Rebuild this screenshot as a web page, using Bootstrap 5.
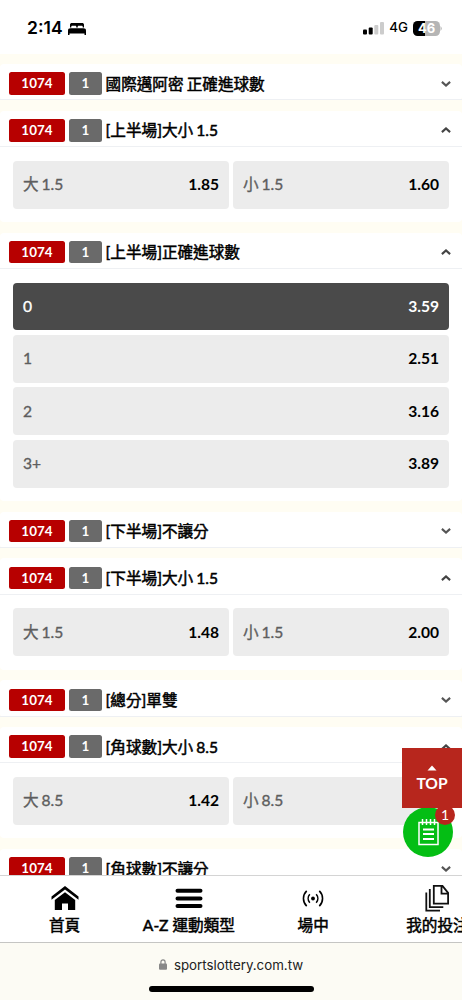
<!DOCTYPE html>
<html lang="zh-Hant">
<head>
<meta charset="utf-8">
<meta name="viewport" content="width=device-width, initial-scale=1">
<title>sportslottery.com.tw</title>
<link href="https://cdn.jsdelivr.net/npm/bootstrap@5.3.0/dist/css/bootstrap.min.css" rel="stylesheet">
<style>
  body { font-family: Lato, "Noto Sans CJK TC", sans-serif; background: #fffdf3; color: #000; height: 1000px; }
  svg { display: block; flex: none; }
  .status { height: 53.5px; background: #fff; font-family: Inter, sans-serif; padding: 3px 20px 0 27px; flex: none; }
  .clock { font-size: 17.5px; font-weight: 600; letter-spacing: 0; }
  .net { font-size: 13.3px; font-weight: 500; }
  .battery { width: 27px; height: 15px; border-radius: 4.5px; background: linear-gradient(90deg, #000 46%, #b5b5b5 46%); color: #fff; font-size: 13px; font-weight: 700; line-height: 15px; }
  .markets { flex: 1 1 0; min-height: 0; gap: 10.4px; padding-top: 10.4px; }
  .market { background: #fff; border-radius: 4px; flex: none; }
  .market-head { height: 36.4px; border-bottom: 1px solid #eef0f3; padding: 4px 9px 0; gap: 4.4px; }
  .tag { height: 22.4px; border-radius: 2.5px; color: #fff; font-size: 13.4px; font-weight: 700; line-height: 23px; text-align: center; flex: none; }
  .tag-id { width: 55.8px; background: #b70000; }
  .tag-no { width: 32.6px; background: #6a6a6a; }
  .market-name { font-size: 15.6px; font-weight: 400; -webkit-text-stroke: .5px #000; line-height: 22px; white-space: nowrap; margin-left: -.6px; word-spacing: -.8px; }
  .market-body { padding: 13.6px 13.3px; display: grid; gap: 4.5px; }
  .two { grid-template-columns: 1fr 1fr; }
  .odd { height: 47.9px; border-radius: 4px; background: #ececec; padding: 0 9.7px; font-size: 15.6px; }
  .odd span { color: #5e5e5e; font-weight: 400; -webkit-text-stroke: .35px currentColor; word-spacing: -1px; }
  .odd b { font-weight: 700; }
  .odd.chosen, .odd.chosen span { background: #4a4a4a; color: #fff; }
  .tabs { height: 67px; background: #fff; border-top: 1px solid #d4d4d4; padding-left: 2.4px; flex: none; }
  .tab { width: 124.3px; flex: none; font-size: 15.6px; font-weight: 400; -webkit-text-stroke: .5px #000; line-height: 22px; color: #000; padding-top: 9px; white-space: nowrap; }
  .tab svg { height: 29px; }
  .address { height: 58px; background: #fcfbf4; border-top: 1px solid #c5c5c3; font: 13.3px/18px Inter, sans-serif; color: #222; padding-top: 12.500px; gap: 12px; flex: none; }
  .homebar { width: 165px; height: 6px; border-radius: 3px; background: #000; }
  .to-top { position: absolute; right: 0; top: 748px; width: 60px; height: 60px; background: #b7261d; color: #fff; font-size: 15.6px; font-weight: 700; line-height: 20px; z-index: 3; padding-top: 17px; }
  .slip { position: absolute; left: 403px; top: 807px; width: 50px; height: 50px; border-radius: 50%; background: #04be14; z-index: 2; }
  .slip-count { position: absolute; left: 32px; top: -2px; width: 20px; height: 20px; border-radius: 50%; background: #b7261d; color: #fff; font-size: 14px; line-height: 20px; text-align: center; }
</style>
</head>
<body class="d-flex flex-column overflow-hidden position-relative">
<svg width="0" height="0" class="position-absolute">
  <symbol id="down" viewBox="0 0 10 6"><path d="M.9.9 5 4.6 9.1.9" fill="none" stroke="#555" stroke-width="2.1"/></symbol>
  <symbol id="up" viewBox="0 0 10 6"><path d="M.9 5.1 5 1.4 9.1 5.1" fill="none" stroke="#444" stroke-width="2.1"/></symbol>
</svg>

<header class="status d-flex align-items-center">
  <span class="clock">2:14</span>
  <svg class="ms-1" style="margin-top:1px" width="20" height="14" viewBox="0 0 20 14"><path d="M3 5.500V2.800C3 1.500 3.800.9 5 .9h10c1.200 0 2 .6 2 1.900v2.700h-1.300V4.700c0-.7-.4-1-1-1h-3c-.6 0-1 .3-1 1v.8H9.300v-.8c0-.7-.4-1-1-1h-3c-.6 0-1 .3-1 1v.8zM1 13V8.700c0-1.700.9-2.400 2.500-2.400h13c1.600 0 2.500.7 2.500 2.400V13h-1.500v-1.400h-15V13z"/></svg>
  <div class="ms-auto d-flex align-items-center">
    <svg width="21" height="14" viewBox="0 0 21 14"><rect x="0" y="8.500" width="4" height="5" rx="1"/><rect x="5.700" y="6.500" width="4" height="7" rx="1"/><g fill="#ccc"><rect x="11.300" y="4" width="4" height="9.500" rx="1"/><rect x="17" y="1" width="4" height="12.500" rx="1"/></g></svg>
    <span class="net" style="margin:0 5px 0 5px">4G</span>
    <span class="battery text-center">46</span>
    <svg width="2" height="5" class="ms-0"><path d="M.5 0Q3 2.500.5 5z" fill="#b5b5b5"/></svg>
  </div>
</header>

<main class="markets d-flex flex-column overflow-hidden">
  <section class="market">
    <div class="market-head d-flex align-items-center"><span class="tag tag-id">1074</span><span class="tag tag-no">1</span><span class="market-name">國際邁阿密 正確進球數</span><svg class="ms-auto me-0" width="14" height="6"><use href="#down" x="2" width="10" height="6"/></svg></div>
  </section>
  <section class="market">
    <div class="market-head d-flex align-items-center"><span class="tag tag-id">1074</span><span class="tag tag-no">1</span><span class="market-name">[上半場]大小 1.5</span><svg class="ms-auto" width="14" height="6"><use href="#up" x="2" width="10" height="6"/></svg></div>
    <div class="market-body two">
      <div class="odd d-flex align-items-center justify-content-between"><span>大 1.5</span><b>1.85</b></div>
      <div class="odd d-flex align-items-center justify-content-between"><span>小 1.5</span><b>1.60</b></div>
    </div>
  </section>
  <section class="market">
    <div class="market-head d-flex align-items-center"><span class="tag tag-id">1074</span><span class="tag tag-no">1</span><span class="market-name">[上半場]正確進球數</span><svg class="ms-auto" width="14" height="6"><use href="#up" x="2" width="10" height="6"/></svg></div>
    <div class="market-body">
      <div class="odd chosen d-flex align-items-center justify-content-between"><span>0</span><b>3.59</b></div>
      <div class="odd d-flex align-items-center justify-content-between"><span>1</span><b>2.51</b></div>
      <div class="odd d-flex align-items-center justify-content-between"><span>2</span><b>3.16</b></div>
      <div class="odd d-flex align-items-center justify-content-between"><span>3+</span><b>3.89</b></div>
    </div>
  </section>
  <section class="market">
    <div class="market-head d-flex align-items-center"><span class="tag tag-id">1074</span><span class="tag tag-no">1</span><span class="market-name">[下半場]不讓分</span><svg class="ms-auto" width="14" height="6"><use href="#down" x="2" width="10" height="6"/></svg></div>
  </section>
  <section class="market">
    <div class="market-head d-flex align-items-center"><span class="tag tag-id">1074</span><span class="tag tag-no">1</span><span class="market-name">[下半場]大小 1.5</span><svg class="ms-auto" width="14" height="6"><use href="#up" x="2" width="10" height="6"/></svg></div>
    <div class="market-body two">
      <div class="odd d-flex align-items-center justify-content-between"><span>大 1.5</span><b>1.48</b></div>
      <div class="odd d-flex align-items-center justify-content-between"><span>小 1.5</span><b>2.00</b></div>
    </div>
  </section>
  <section class="market">
    <div class="market-head d-flex align-items-center"><span class="tag tag-id">1074</span><span class="tag tag-no">1</span><span class="market-name">[總分]單雙</span><svg class="ms-auto" width="14" height="6"><use href="#down" x="2" width="10" height="6"/></svg></div>
  </section>
  <section class="market">
    <div class="market-head d-flex align-items-center"><span class="tag tag-id">1074</span><span class="tag tag-no">1</span><span class="market-name">[角球數]大小 8.5</span><svg class="ms-auto" width="14" height="6"><use href="#up" x="2" width="10" height="6"/></svg></div>
    <div class="market-body two">
      <div class="odd d-flex align-items-center justify-content-between"><span>大 8.5</span><b>1.42</b></div>
      <div class="odd d-flex align-items-center justify-content-between"><span>小 8.5</span></div>
    </div>
  </section>
  <section class="market">
    <div class="market-head d-flex align-items-center"><span class="tag tag-id">1074</span><span class="tag tag-no">1</span><span class="market-name">[角球數]不讓分</span><svg class="ms-auto" width="14" height="6"><use href="#down" x="2" width="10" height="6"/></svg></div>
  </section>
</main>

<div class="to-top d-flex flex-column align-items-center">
  <svg width="10" height="6"><path d="M.5 5.500 5 .5l4.500 5z" fill="#fff"/></svg>
  <span style="margin-top:2px">TOP</span>
</div>
<div class="slip">
  <svg style="margin:11px 0 0 15px" width="21" height="28" viewBox="0 0 21 28" fill="none" stroke="#fff" stroke-width="1.500"><path d="M1 4.500h19V26.500H1zM4.500 1v6M8.500 1v6M12.500 1v6M16.500 1v6"/><path d="M5 11.500h11M5 16h11M5 21h11" stroke-width="2"/></svg>
  <span class="slip-count">1</span>
</div>

<nav class="tabs d-flex">
  <a class="tab d-flex flex-column align-items-center text-decoration-none"><svg width="28" height="29" viewBox="0 0 28 29"><path d="M.5 11.500 14 1l13.500 10.500v3.300L14 4.400.5 14.800zM3.800 15 14 7.200 24.200 15v10H17v-6.500h-6V25H3.800z"/></svg><span>首頁</span></a>
  <a class="tab d-flex flex-column align-items-center text-decoration-none"><svg width="28" height="29" viewBox="0 0 28 29"><path d="M2.500 5.700h23M2.500 13.400h23M2.500 21.100h23" stroke="#000" stroke-width="4" stroke-linecap="round"/></svg><span>A-Z 運動類型</span></a>
  <a class="tab d-flex flex-column align-items-center text-decoration-none"><svg width="22" height="29" viewBox="0 0 22 29" fill="none" stroke="#000" stroke-width="1.600"><circle cx="11" cy="13.500" r="1.900" fill="#000" stroke="none"/><path d="M7.800 9.300a6.300 6.300 0 0 0 0 8.400M14.200 9.300a6.300 6.300 0 0 1 0 8.400M4.700 5.900a10.500 10.500 0 0 0 0 15.200M17.300 5.900a10.500 10.500 0 0 1 0 15.200"/></svg><span>場中</span></a>
  <a class="tab d-flex flex-column align-items-center text-decoration-none"><svg width="24" height="29" viewBox="0 0 24 29" fill="none" stroke="#111" stroke-width="1.800"><path d="M8.800.9h8.700l5.600 7v10.700H8.800zM16.500 1v7.600h6.500M4.800 3.900v18.300h13.500M1.300 7.400v18.300H15"/></svg><span>我的投注</span></a>
</nav>
<footer class="address d-flex flex-column align-items-center">
  <div class="d-flex align-items-center" style="gap:7px"><svg width="8" height="11" viewBox="0 0 8 11"><rect y="4.500" width="8" height="6.300" rx="1" fill="#888"/><path d="M1.900 5V3a2.100 2.100 0 0 1 4.200 0v2" fill="none" stroke="#888" stroke-width="1.200"/></svg><span>sportslottery.com.tw</span></div>
  <div class="homebar"></div>
</footer>
<script src="https://cdn.jsdelivr.net/npm/bootstrap@5.3.0/dist/js/bootstrap.bundle.min.js"></script>
</body>
</html>
